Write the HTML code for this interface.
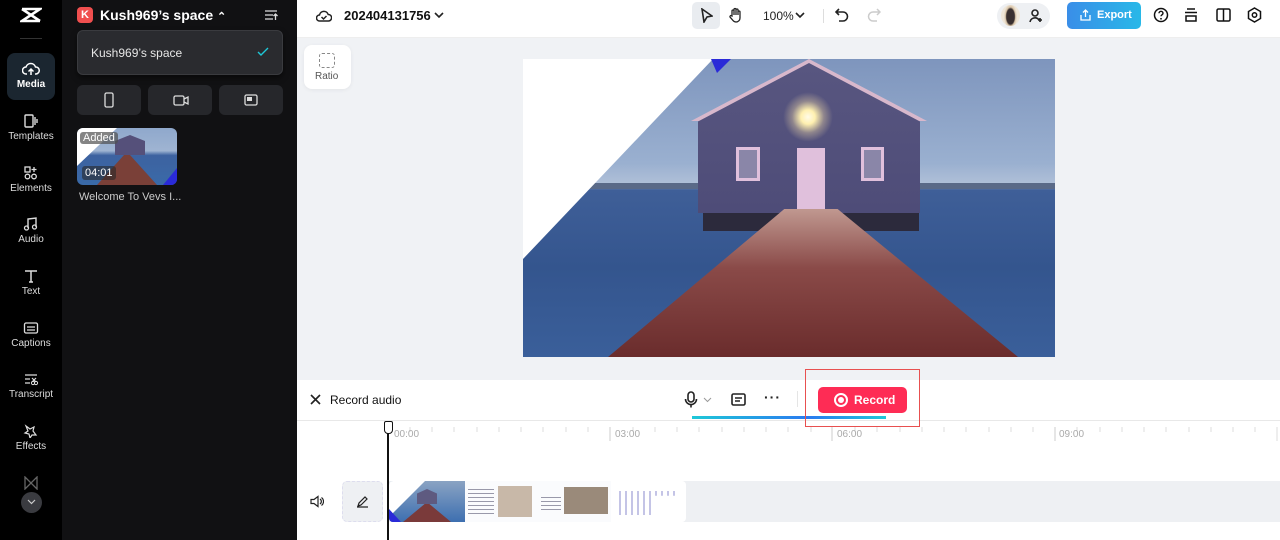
<!DOCTYPE html>
<html><head><meta charset="utf-8"><style>
*{margin:0;padding:0;box-sizing:border-box}
body{width:1280px;height:540px;overflow:hidden;font-family:"Liberation Sans",sans-serif;background:#fff;position:relative}
.a{position:absolute}
.nav{left:0;top:0;width:62px;height:540px;background:#000}
.ni{position:absolute;left:0;width:62px;text-align:center;color:#ddd;font-size:10px}
.ni svg{display:block;margin:0 auto 3px}
.panel{left:62px;top:0;width:235px;height:540px;background:#111113}
.btn{position:absolute;top:85px;width:64px;height:30px;background:#26272b;border-radius:6px}
.ic{stroke:#222;fill:none;stroke-width:1.6}
</style></head><body>
<div class="a nav">
 <svg class="a" style="left:20px;top:7px" width="22" height="16" viewBox="0 0 22 16"><path d="M2 2h18L2 14h18M2 2l18 12" stroke="#fff" stroke-width="2.6" fill="none"/></svg>
 <div class="a" style="left:20px;top:38px;width:22px;height:1px;background:#333"></div>
 <div class="a" style="left:7px;top:53px;width:48px;height:47px;border-radius:8px;background:#1b2630"></div>
 <div class="ni" style="top:62px;color:#fff;font-weight:bold"><svg width="18" height="14" viewBox="0 0 18 14"><path d="M5 12H4a3.5 3.5 0 010-7 5 5 0 019.5 0 3.5 3.5 0 01.5 7h-1M9 13V7M6.5 9.5L9 7l2.5 2.5" stroke="#fff" stroke-width="1.5" fill="none"/></svg>Media</div>
 <div class="ni" style="top:114px"><svg width="16" height="14"><rect x="2" y="1" width="8" height="12" rx="1" stroke="#ddd" stroke-width="1.4" fill="none"/><path d="M12 3v8M14 5v4" stroke="#ddd" stroke-width="1.4"/></svg>Templates</div>
 <div class="ni" style="top:166px"><svg width="16" height="14"><rect x="2" y="1" width="5" height="5" stroke="#ddd" fill="none" stroke-width="1.3"/><path d="M11 1v5M8.5 3.5h5" stroke="#ddd" stroke-width="1.3"/><circle cx="4.5" cy="10.5" r="2.3" stroke="#ddd" fill="none" stroke-width="1.3"/><circle cx="11" cy="10.5" r="2.3" stroke="#ddd" fill="none" stroke-width="1.3"/></svg>Elements</div>
 <div class="ni" style="top:217px"><svg width="16" height="14"><path d="M5 11V2l8-1v9" stroke="#ddd" stroke-width="1.4" fill="none"/><circle cx="3.5" cy="11" r="2" stroke="#ddd" fill="none" stroke-width="1.3"/><circle cx="11.5" cy="10" r="2" stroke="#ddd" fill="none" stroke-width="1.3"/></svg>Audio</div>
 <div class="ni" style="top:269px"><svg width="16" height="14"><path d="M2 2h12M8 2v11M6 13h4" stroke="#ddd" stroke-width="1.5"/></svg>Text</div>
 <div class="ni" style="top:321px"><svg width="16" height="14"><rect x="1.5" y="2" width="13" height="10" rx="1.5" stroke="#ddd" fill="none" stroke-width="1.3"/><path d="M4 6h8M4 9h8" stroke="#ddd" stroke-width="1.3"/></svg>Captions</div>
 <div class="ni" style="top:372px"><svg width="16" height="14"><path d="M2 3h12M2 7h5M2 11h5" stroke="#ddd" stroke-width="1.3"/><circle cx="10" cy="11" r="1.6" stroke="#ddd" fill="none"/><circle cx="13" cy="11" r="1.6" stroke="#ddd" fill="none"/><path d="M9 6l4 4M13 6l-4 4" stroke="#ddd" stroke-width="1.2"/></svg>Transcript</div>
 <div class="ni" style="top:424px"><svg width="16" height="14"><path d="M3 2l4 3 4-2-1 4 3 4-4 0-2 3-1-4-4-1 3-2z" stroke="#ddd" stroke-width="1.2" fill="none"/></svg>Effects</div>
 <svg class="a" style="left:24px;top:476px" width="14" height="14"><path d="M1 1v12l12-12v12z" stroke="#666" stroke-width="1.3" fill="none"/></svg>
 <div class="a" style="left:21px;top:492px;width:21px;height:21px;border-radius:50%;background:#3a3b40"></div>
 <svg class="a" style="left:27px;top:499px" width="9" height="6"><path d="M1 1l3.5 3.5L8 1" stroke="#ccc" stroke-width="1.2" fill="none"/></svg>
</div>
<div class="a panel">
 <div class="a" style="left:15px;top:7px;width:16px;height:16px;border-radius:4px;background:#f04f4f;color:#fff;font-size:11px;font-weight:bold;text-align:center;line-height:16px">K</div>
 <div class="a" style="left:38px;top:7px;color:#fff;font-size:14px;font-weight:bold">Kush969’s space <span style="font-size:11px">⌃</span></div>
 <svg class="a" style="left:202px;top:9px" width="14" height="12"><path d="M1 2h12M1 6h8M1 10h8M11.5 11V5M9.5 7l2-2 2 2" stroke="#ddd" stroke-width="1.3" fill="none"/></svg>
 <div class="a" style="left:15px;top:30px;width:206px;height:45px;border-radius:6px;background:#2a2b2f;border:1px solid #3a3b3f;box-shadow:0 3px 6px rgba(0,0,0,.5)"></div>
 <div class="a" style="left:29px;top:46px;color:#e6e6e6;font-size:12px">Kush969’s space</div>
 <svg class="a" style="left:195px;top:47px" width="12" height="9"><path d="M1 5l3 3 7-7" stroke="#1ec8d8" stroke-width="1.4" fill="none"/></svg>
 <div class="btn" style="left:15px"></div><div class="btn" style="left:86px"></div><div class="btn" style="left:157px"></div>
 <svg class="a" style="left:42px;top:92px" width="10" height="16"><rect x="1" y="1" width="8" height="14" rx="1.5" stroke="#ddd" stroke-width="1.3" fill="none"/></svg>
 <svg class="a" style="left:111px;top:94px" width="16" height="12"><rect x="1" y="2" width="10" height="9" rx="1.5" stroke="#ddd" stroke-width="1.3" fill="none"/><path d="M11 5l4-2v7l-4-2" stroke="#ddd" stroke-width="1.3" fill="none"/></svg>
 <svg class="a" style="left:182px;top:94px" width="14" height="12"><rect x="1" y="1" width="12" height="10" rx="1.5" stroke="#ddd" stroke-width="1.3" fill="none"/><rect x="3" y="3" width="5" height="4" fill="#ddd"/></svg>
 <div class="a" style="left:15px;top:128px;width:100px;height:57px;border-radius:6px;overflow:hidden;background:linear-gradient(180deg,#8fa8cc 0,#9fb4d2 40%,#3d62a0 48%,#3a6aa8 100%)">
  <div class="a" style="left:38px;top:7px;width:30px;height:20px;background:#55507a;clip-path:polygon(50% 0,100% 30%,100% 100%,0 100%,0 30%)"></div>
  <div class="a" style="left:20px;top:27px;width:60px;height:30px;background:#7a4038;clip-path:polygon(45% 0,55% 0,100% 100%,0 100%)"></div>
  <div class="a" style="left:0;top:0;width:100px;height:57px;background:#fff;clip-path:polygon(0 0,40px 0,0 38px)"></div>
  <div class="a" style="left:86px;top:40px;width:14px;height:17px;background:#2a2ad8;clip-path:polygon(100% 0,100% 100%,0 100%)"></div>
  <div class="a" style="left:3px;top:4px;background:rgba(80,80,80,.7);color:#fff;font-size:11px;padding:0 3px;border-radius:3px">Added</div>
  <div class="a" style="left:5px;top:38px;background:rgba(40,40,40,.6);color:#fff;font-size:11px;padding:1px 3px;border-radius:3px">04:01</div>
 </div>
 <div class="a" style="left:17px;top:191px;color:#ccc;font-size:11px">Welcome To Vevs I...</div>
 <div class="a" style="left:235px;top:261px;width:5px;height:42px;background:#2a2b2f;border-radius:0 5px 5px 0"></div>
</div>
<!-- top bar -->
<div class="a" style="left:297px;top:0;width:983px;height:38px;background:#fff;border-bottom:1px solid #eee"></div>
<svg class="a" style="left:316px;top:9px" width="16" height="13"><path d="M4 12H3.5a3 3 0 010-6 4.5 4.5 0 018.7-.5A3 3 0 0112.5 12zM5.5 8l2 2 3-3" stroke="#222" stroke-width="1.5" fill="none"/></svg>
<div class="a" style="left:344px;top:8px;font-size:13px;font-weight:bold;color:#111">202404131756</div>
<svg class="a" style="left:434px;top:12px" width="10" height="7"><path d="M1 1l4 4 4-4" class="ic"/></svg>
<div class="a" style="left:692px;top:2px;width:28px;height:27px;border-radius:5px;background:#e9ecf0"></div>
<svg class="a" style="left:700px;top:8px" width="13" height="15"><path d="M2 1l10 7-5 1-3 5z" class="ic"/></svg>
<svg class="a" style="left:728px;top:7px" width="15" height="16"><path d="M4 9V4a1 1 0 012 0v4V2.5a1 1 0 012 0V8V3a1 1 0 012 0v5V5a1 1 0 012 0v6a4 4 0 01-4 4H8a4 4 0 01-3-1.5L2 10a1 1 0 011.5-1.2z" stroke="#222" stroke-width="1.3" fill="none"/></svg>
<div class="a" style="left:763px;top:9px;font-size:12px;color:#222">100%</div>
<svg class="a" style="left:795px;top:12px" width="10" height="7"><path d="M1 1l4 4 4-4" class="ic"/></svg>
<div class="a" style="left:823px;top:9px;width:1px;height:14px;background:#ddd"></div>
<svg class="a" style="left:835px;top:8px" width="14" height="14"><path d="M4 1L1 4l3 3M1 4h7a4.5 4.5 0 010 9H4" class="ic"/></svg>
<svg class="a" style="left:867px;top:8px" width="14" height="14"><path d="M10 1l3 3-3 3M13 4H6a4.5 4.5 0 000 9h4" stroke="#ccc" stroke-width="1.5" fill="none"/></svg>
<div class="a" style="left:997px;top:3px;width:53px;height:26px;border-radius:13px;background:#eef0f3"></div>
<div class="a" style="left:1001px;top:5px;width:19px;height:21px;border-radius:50%;background:radial-gradient(ellipse 35% 60% at 50% 55%,#3a3030 0 60%,#d8c4a8 75%,#efe6d8 100%)"></div>
<svg class="a" style="left:1029px;top:8px" width="15" height="15"><circle cx="6" cy="5" r="3" class="ic"/><path d="M1 14a5 5 0 019-2M11 10v4M9 12h4" class="ic"/></svg>
<div class="a" style="left:1067px;top:2px;width:74px;height:27px;border-radius:5px;background:linear-gradient(90deg,#3a8ee8,#28b8e8);color:#fff;font-size:11px;font-weight:bold;line-height:27px;padding-left:30px">Export</div>
<svg class="a" style="left:1080px;top:9px" width="11" height="12"><path d="M1 6v5h9V6M5.5 8V1M3 3.5L5.5 1 8 3.5" stroke="#fff" stroke-width="1.3" fill="none"/></svg>
<svg class="a" style="left:1153px;top:7px" width="16" height="16"><circle cx="8" cy="8" r="6.5" stroke="#111" stroke-width="1.5" fill="none"/><path d="M6 6.3a2 2 0 114 0c0 1.5-2 1.5-2 3" stroke="#111" stroke-width="1.4" fill="none"/><circle cx="8" cy="11.8" r=".9" fill="#111"/></svg>
<svg class="a" style="left:1184px;top:8px" width="14" height="14"><path d="M3 1h8M1 4.5h12M2 8h10v5H2z" stroke="#111" stroke-width="1.5" fill="none"/></svg>
<svg class="a" style="left:1216px;top:8px" width="15" height="14"><rect x="1" y="1" width="13" height="12" rx="1.5" stroke="#111" stroke-width="1.5" fill="none"/><path d="M7.5 1v12" stroke="#111" stroke-width="1.5"/></svg>
<svg class="a" style="left:1247px;top:7px" width="15" height="16"><path d="M7.5 1l6 3.5v7l-6 3.5-6-3.5v-7z" stroke="#111" stroke-width="1.5" fill="none"/><circle cx="7.5" cy="8" r="2.2" stroke="#111" stroke-width="1.5" fill="none"/></svg>
<!-- canvas -->
<div class="a" style="left:297px;top:38px;width:983px;height:342px;background:#f0f2f5"></div>
<div class="a" style="left:304px;top:45px;width:47px;height:44px;border-radius:8px;background:#fff;box-shadow:0 1px 4px rgba(0,0,0,.06)"></div>
<div class="a" style="left:319px;top:53px;width:16px;height:15px;border:1.3px dashed #888;border-radius:3px"></div>
<div class="a" style="left:315px;top:71px;font-size:10px;color:#555">Ratio</div>
<div class="a" style="left:523px;top:59px;width:532px;height:298px;overflow:hidden;background:linear-gradient(180deg,#7e95bd 0,#9ab0d0 35%,#b0c0d8 42%,#3f5f98 44%,#34558e 70%,#3a5f9a 100%)">
 <div class="a" style="left:0;top:124px;width:532px;height:6px;background:#5a6a88"></div>
 <div class="a" style="left:168px;top:0;width:236px;height:62px;background:#d8b8cc;clip-path:polygon(50% 0,100% 100%,0 100%)"></div>
 <div class="a" style="left:175px;top:4px;width:222px;height:150px;background:linear-gradient(180deg,#585680,#4e4c78);clip-path:polygon(50% 0,100% 39%,100% 100%,0 100%,0 39%)"></div>
 <div class="a" style="left:213px;top:88px;width:24px;height:34px;border:3px solid #e0c0dc;background:#8a86a8"></div>
 <div class="a" style="left:274px;top:89px;width:28px;height:62px;background:#e0c0dc"></div>
 <div class="a" style="left:338px;top:88px;width:23px;height:34px;border:3px solid #e0c0dc;background:#8a86a8"></div>
 <div class="a" style="left:260px;top:33px;width:50px;height:50px;border-radius:50%;background:radial-gradient(circle,#fffbe8 0,#fff0b0 20%,rgba(255,230,170,.35) 45%,rgba(255,230,160,0) 70%)"></div>
 <div class="a" style="left:180px;top:154px;width:216px;height:18px;background:#2c2a3c"></div>
 <div class="a" style="left:85px;top:150px;width:410px;height:148px;background:linear-gradient(180deg,#c09890 0,#8a4a48 40%,#6a2c2c 100%);clip-path:polygon(43% 0,56% 0,100% 100%,0 100%)"></div>
 <div class="a" style="left:0;top:0;width:532px;height:298px;background:#fff;clip-path:polygon(0 0,190px 0,0 200px)"></div>
 <div class="a" style="left:0;top:0;width:532px;height:298px;background:#2a2ad8;clip-path:polygon(188px 0,208px 0,194px 14px)"></div>
</div>
<!-- record bar -->
<div class="a" style="left:297px;top:380px;width:983px;height:41px;background:#fff;border-bottom:1px solid #e8e8e8"></div>
<svg class="a" style="left:310px;top:394px" width="11" height="11"><path d="M1 1l9 9M10 1l-9 9" class="ic"/></svg>
<div class="a" style="left:330px;top:393px;font-size:12px;color:#111">Record audio</div>
<svg class="a" style="left:684px;top:391px" width="14" height="17"><rect x="4" y="1" width="6" height="10" rx="3" class="ic"/><path d="M1.5 8a5.5 5.5 0 0011 0M7 13.5v3" class="ic"/></svg>
<svg class="a" style="left:703px;top:397px" width="9" height="6"><path d="M1 1l3.5 3.5L8 1" stroke="#999" stroke-width="1" fill="none"/></svg>
<svg class="a" style="left:731px;top:393px" width="15" height="13"><rect x="1" y="1" width="13" height="11" rx="1.5" class="ic"/><path d="M4 5h7M4 8h5" class="ic"/></svg>
<div class="a" style="left:764px;top:389px;font-size:14px;color:#222;letter-spacing:1px;font-weight:bold">···</div>
<div class="a" style="left:797px;top:391px;width:1px;height:16px;background:#e5e5e5"></div>
<div class="a" style="left:692px;top:416px;width:194px;height:3px;background:linear-gradient(90deg,#1ec8d8,#2a7af0 60%,#1ec8d8)"></div>
<div class="a" style="left:818px;top:387px;width:89px;height:26px;border-radius:5px;background:#fe2c55"></div>
<div class="a" style="left:834px;top:393px;width:14px;height:14px;border-radius:50%;border:2px solid #fff"></div>
<div class="a" style="left:838px;top:397px;width:6px;height:6px;border-radius:50%;background:#fff"></div>
<div class="a" style="left:854px;top:393px;font-size:12px;font-weight:bold;color:#fff">Record</div>
<div class="a" style="left:805px;top:369px;width:115px;height:58px;border:1px solid #e85050"></div>
<!-- timeline -->
<svg class="a" style="left:297px;top:421px" width="983" height="20">
 <g stroke="#ddd" stroke-width="1">
 <path d="M113 6v5M135 6v5M157 6v5M180 6v5M202 6v5M224 6v5M246 6v5M269 6v5M291 6v5M336 6v5M358 6v5M380 6v5M402 6v5M425 6v5M447 6v5M469 6v5M491 6v5M514 6v5M558 6v5M580 6v5M603 6v5M625 6v5M647 6v5M669 6v5M692 6v5M714 6v5M736 6v5M780 6v5M803 6v5M825 6v5M847 6v5M869 6v5M892 6v5M914 6v5M936 6v5M958 6v5M980 6v14"/>
 <path d="M313 6v14M535 6v14M758 6v14" stroke="#ccc"/></g>
</svg>
<div class="a" style="left:394px;top:429px;font-size:10px;color:#aaa">00:00</div>
<div class="a" style="left:615px;top:429px;font-size:10px;color:#aaa">03:00</div>
<div class="a" style="left:837px;top:429px;font-size:10px;color:#aaa">06:00</div>
<div class="a" style="left:1059px;top:429px;font-size:10px;color:#aaa">09:00</div>
<div class="a" style="left:387px;top:432px;width:2px;height:108px;background:#111"></div>
<div class="a" style="left:384px;top:421px;width:9px;height:13px;border:1.5px solid #111;border-radius:2px 2px 4px 4px;background:#fff"></div>
<div class="a" style="left:389px;top:481px;width:891px;height:41px;background:#eef0f3"></div>
<svg class="a" style="left:310px;top:495px" width="14" height="13"><path d="M1 4.5h3l4-3v10l-4-3H1zM10 4a3 3 0 010 5M11.5 2.5a5 5 0 010 8" stroke="#222" stroke-width="1.2" fill="none"/></svg>
<div class="a" style="left:342px;top:481px;width:41px;height:41px;border-radius:5px;background:#eef0f3;border:1px dashed #dde"></div>
<svg class="a" style="left:356px;top:495px" width="13" height="13"><path d="M2 11l1-3 6-6 2 2-6 6zM1 12h11" stroke="#222" stroke-width="1.2" fill="none"/></svg>
<div class="a" style="left:389px;top:481px;width:76px;height:41px;background:linear-gradient(180deg,#8aa3c3,#3d6fb0);overflow:hidden;border-radius:4px 0 0 4px">
 <div class="a" style="left:28px;top:8px;width:20px;height:15px;background:#5e5a80;clip-path:polygon(50% 0,100% 30%,100% 100%,0 100%,0 30%)"></div>
 <div class="a" style="left:14px;top:23px;width:48px;height:18px;background:#7a3a3a;clip-path:polygon(45% 0,55% 0,100% 100%,0 100%)"></div>
 <div class="a" style="left:0;top:0;width:76px;height:41px;background:#fff;clip-path:polygon(0 0,36px 0,0 36px)"></div>
 <div class="a" style="left:0;top:28px;width:12px;height:13px;background:#2a2ad8;clip-path:polygon(0 0,100% 100%,0 100%)"></div>
</div>
<div class="a" style="left:465px;top:481px;width:73px;height:41px;background:#fafbfd">
 <div class="a" style="left:33px;top:5px;width:34px;height:31px;background:#c8b8a8"></div>
 <div class="a" style="left:3px;top:8px;width:26px;height:26px;background:repeating-linear-gradient(180deg,#99a 0 1px,transparent 1px 4px)"></div>
</div>
<div class="a" style="left:538px;top:481px;width:73px;height:41px;background:#fafbfd">
 <div class="a" style="left:26px;top:6px;width:44px;height:27px;background:#9a8a7a"></div>
 <div class="a" style="left:3px;top:16px;width:20px;height:14px;background:repeating-linear-gradient(180deg,#99a 0 1px,transparent 1px 4px)"></div>
</div>
<div class="a" style="left:611px;top:481px;width:75px;height:41px;background:#fff;border-radius:0 4px 4px 0">
 <div class="a" style="left:8px;top:10px;width:60px;height:24px;background:repeating-linear-gradient(90deg,#8888cc 0 2px,transparent 2px 6px);opacity:.5;clip-path:polygon(0 0,100% 0,100% 20%,60% 20%,60% 100%,0 100%)"></div>
</div>
</body></html>
